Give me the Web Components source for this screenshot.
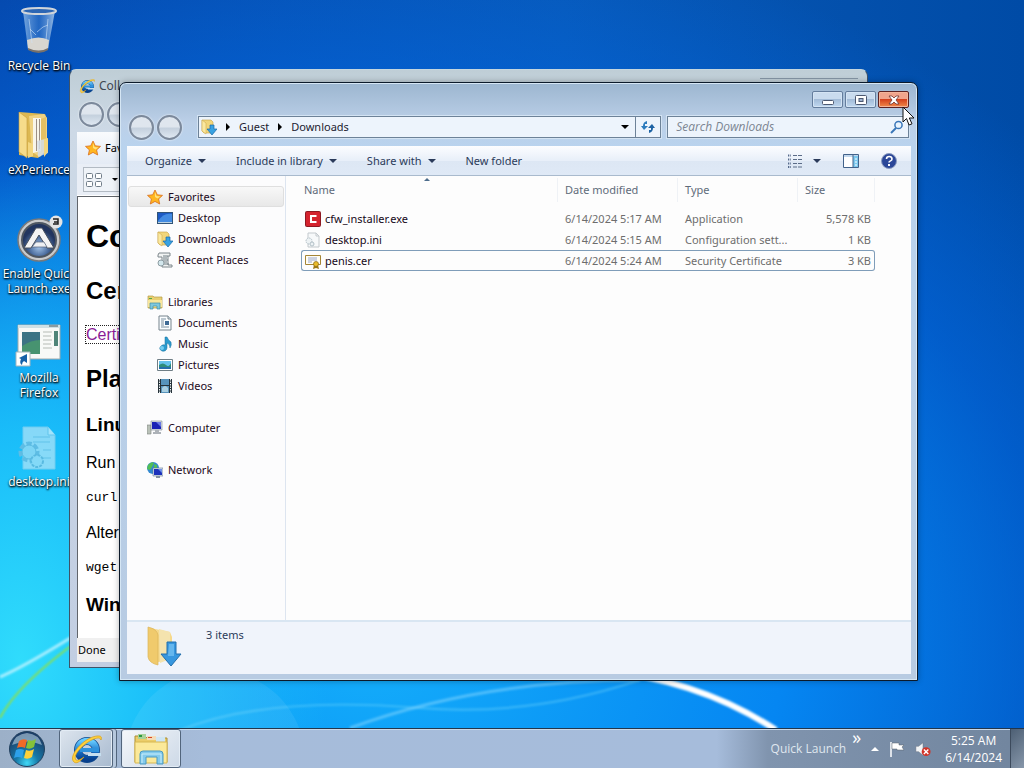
<!DOCTYPE html>
<html lang="en">
<head>
<meta charset="utf-8">
<title>Desktop</title>
<style>
html, body { margin: 0; height: 100%; overflow: hidden; }
body { font: 11px/16px "Noto Sans", "Open Sans", sans-serif; color: #000; }
</style>
</head>
<body>
<desk-top>
  <desktop-icon icon="bin" label="Recycle Bin"></desktop-icon>
  <desktop-icon icon="docs" label="eXPerience"></desktop-icon>
  <desktop-icon icon="autoit" label="Enable Quick Launch.exe"></desktop-icon>
  <desktop-icon icon="shot" label="Mozilla Firefox"></desktop-icon>
  <desktop-icon icon="inibig" label="desktop.ini"></desktop-icon>
  <browser-window slot="windows"></browser-window>
  <explorer-window slot="windows"></explorer-window>
  <task-bar slot="taskbar"></task-bar>
</desk-top>

<script>
const ICONS = {
bin: ['0 0 48 48', `<defs><linearGradient id="a"><stop stop-color="#9cc4ec" stop-opacity=".75"/><stop offset=".5" stop-color="#3f7fce" stop-opacity=".5"/><stop offset="1" stop-color="#bcd6f0" stop-opacity=".8"/></linearGradient></defs><path d="M8 4 13 42q11 6 20 0L40 4z" fill="url(#a)"/><path d="M12 33q12-5 22 0l-1 9q-9 6-20 0z" fill="#d8d6d0"/><path d="M13 41q11 5 20 0v2q-9 6-20 0z" fill="#77706a"/><ellipse cx="24" cy="4" rx="17" ry="3" fill="#2c66b4" stroke="#d0d5da" stroke-width="2"/><path d="m14 12 3 24M33 12l-2 21M22 25l6-5 5-2M15 22l6 6" stroke="#cfe3f7" fill="none" opacity=".6"/>`],
docs: ['0 0 48 48', `<path d="M4 1 30 3l2 5v31l-9 8L4 44z" fill="#dcb852"/><path d="M4 1 12 7v40l-8-6z" fill="#f6dc8b" stroke="#c79c3b" stroke-width=".6"/><path d="M14 5 29 3l3 4v30l-7 9-8-5z" fill="#efd283"/><path d="M18 7h8v33l-8 2z" fill="#f8f5ea"/><path d="M21 8h1v32h-1zM24 8h1v30h-1z" fill="#9c8f85"/><path d="M26 8l5-2v31l-5 5z" fill="#e5c063"/><path d="M22 30l8-2 3 2v12l-10 4z" fill="#d5dde6" opacity=".85"/><path d="M13 31l5 2v12l-5 2zM29 28l4-1v14l-4 5z" fill="#f3d67f"/>`],
autoit: ['0 0 48 48', `<defs><radialGradient id="a" cy=".7"><stop stop-color="#a4c5ea"/><stop offset=".6" stop-color="#47689a"/><stop offset="1" stop-color="#22355f"/></radialGradient></defs><circle cx="24" cy="25" r="21" fill="#c9cacb" stroke="#77797c" stroke-width="1.5"/><circle cx="24" cy="25" r="17" fill="url(#a)" stroke="#4e5661" stroke-width="2"/><path d="m21 13h6l12 20h-7L24 20l-8 13H9z" fill="#f4f4f4" stroke="#48505d"/><path d="m17 32 4-5h8l3 5z" fill="#eef0f3" stroke="#506078" stroke-width=".7"/><circle cx="41" cy="7" r="6.500" fill="#e4e5e6"/><path d="M38 4h5v5h-5m1-2h4" stroke="#222" stroke-width="1.5" fill="none"/>`],
shot: ['0 0 48 48', `<path d="M3 6h42v34H3z" fill="#f8f9f7" stroke="#9eaaac"/><path d="M3 6h42v3H3z" fill="#cfe0e5"/><path d="M34 7h9" stroke="#48565a"/><path d="M7 13h18v22H7z" fill="#479370"/><path d="M7 13h18v8q-9 0-18 6z" fill="#3c7384"/><path d="M28 13h9M28 17h8M28 21h9M28 25h8M28 29h9" stroke="#cbd0cb" stroke-width="1.5"/><path d="M39 12h4v15h-4z" fill="#4f8478"/><path d="M1 33h14v14H1z" fill="#fff" stroke="#a5b5bd"/><path d="M4 39 12 35v9l-3-2q-2 1-2 4-3-2-1-6z" fill="#1660a8"/>`],
inibig: ['0 0 48 48', `<g opacity=".6"><path d="M8 4h25l7 8v34H8z" fill="#cfecf8" stroke="#a5d6ec"/><path d="M33 4v8h7" fill="#fff" stroke="#8fcbe6"/><path d="M18 14h17M18 19h17M28 27h8M28 35h8" stroke="#8fc6df"/><circle cx="14" cy="29" r="8" fill="none" stroke="#8bbcd8" stroke-width="5" stroke-dasharray="5 2"/><circle cx="14" cy="29" r="7" fill="#bee4f3" stroke="#82b7d2"/><circle cx="22" cy="38" r="6" fill="#c8e9f6" stroke="#82b7d2" stroke-width="2" stroke-dasharray="3 1"/></g>`],
ie: ['0 0 32 32', `<defs><linearGradient id="a" x2="0" y2="1"><stop stop-color="#65caff"/><stop offset=".6" stop-color="#166ec4"/><stop offset="1" stop-color="#07408e"/></linearGradient></defs><circle cx="17" cy="17" r="9" fill="none" stroke="#124a8c" stroke-width="8"/><circle cx="17" cy="17" r="9" fill="none" stroke="url(#a)" stroke-width="6.5"/><path d="M18 20h13v3H18z" fill="#c6dff0"/><path d="M10 15h19v4H10z" fill="#2f92dc"/><path d="M4 29C-3 23 16 2 29 3c2 0 3 1 2 4-1-3-4-2-7-1C14 10 2 22 6 27c2 1 5-1 8-3-4 5-8 7-10 5" fill="#ffd13c" stroke="#d99e17" stroke-width=".7"/>`],
star: ['0 0 16 16', `<path d="m8 1 2.3 4.8 5.2.6-3.9 3.5 1.1 5.1L8 12.4 3.3 15l1.1-5.1L.5 6.4l5.2-.6z" fill="#ffb620" stroke="#d96d1c" stroke-width=".8"/><path d="m8 3 1.5 4 4 .4-3 2.2L8 8z" fill="#ffe27e"/>`],
desktop: ['0 0 16 16', `<path d="M0 2h16v12H0z" fill="#315478"/><path d="M1 3h14v9H1z" fill="#1d5ac4"/><path d="M1 11Q7 2 15 4v8H1z" fill="#438be2"/><path d="M1 12h14v1H1z" fill="#bcd2e2"/>`],
down: ['0 0 16 16', `<path d="M1 1h9l2 2v11H3L1 12z" fill="#f1d67b" stroke="#c8a345" stroke-width=".6"/><path d="M1 1 5 4v11l-4-3z" fill="#fae89f" stroke="#c8a345" stroke-width=".5"/><path d="M9 6h4v4h3l-5 6-5-6h3z" fill="#38a2e2" stroke="#1969a8" stroke-width=".7"/>`],
recent: ['0 0 16 16', `<path d="M2 1h11v3h-2v9h4v2H5V5H1V3z" fill="#f1f3f3" stroke="#7d868b"/><path d="M6 4h5M6 6h4M6 8h5M6 10h4M6 12h6" stroke="#6f7c83"/><circle cx="4" cy="11" r="3" fill="#d3e7ed" stroke="#8d9ca2"/>`],
lib: ['0 0 16 16', `<path d="M1 2h5l1 1h8v11H1z" fill="#e9cf72" stroke="#b69b45" stroke-width=".7"/><path d="M2 4h3v1H2z" fill="#4eaa45"/><path d="M1 6h14v7H1z" fill="#f8e69b"/><path d="M3 9h10v6h-3v-3H6v3H3z" fill="#7fc8dd" stroke="#408da8" stroke-width=".7"/>`],
doc: ['0 0 16 16', `<path d="M2 1h9l3 3v11H2z" fill="#fafdff" stroke="#76848d"/><path d="M11 1v3h3" fill="#d6e4eb" stroke="#76848d"/><path d="M4 4h5M4 6h3M4 8h3M4 10h3M4 12h8" stroke="#7a8f9f"/><path d="M8 6h4v4H8z" fill="#3e6a95"/>`],
music: ['0 0 16 16', `<path d="M8 1h2q1 3 4 5 1 3-1 6 0-4-3-5v5q-1 4-5 3-4-2-1-5 2-2 4-1z" fill="#2c9bce" stroke="#19719c" stroke-width=".5"/><circle cx="5" cy="12" r="2" fill="#76cdf0"/>`],
pic: ['0 0 16 16', `<path d="M.5 2.5h15v11H.5z" fill="#fff" stroke="#6f7e86"/><path d="M2 4h12v8H2z" fill="#65c2ec"/><path d="M2 8q4-3 7 0t5-2v6H2z" fill="#2f8d7a"/><path d="M2 10h12v2H2z" fill="#256eac"/>`],
video: ['0 0 16 16', `<path d="M1 1h14v14H1z" fill="#263239"/><path d="M4 1h8v6H4zM4 8h8v7H4z" fill="#5793bb"/><path d="M5 10q3-4 6 0v4H5z" fill="#a9cfe1"/><path d="M2.500 1v14M13.500 1v14" stroke="#e8eff3" stroke-dasharray="1.500 1"/>`],
comp: ['0 0 16 16', `<path d="M0 5h4v9H0z" fill="#b9c1b8" stroke="#7c857f" stroke-width=".6"/><path d="M4 1h11v9H4z" fill="#dbe1e7" stroke="#7e8790" stroke-width=".6"/><path d="M5 2h9v7H5z" fill="#1922b5"/><path d="m9 2 5 0v5z" fill="#6a78e4"/><path d="M8 10h4v2h2v2H6v-2h2z" fill="#adb2b8"/>`],
net: ['0 0 16 16', `<circle cx="6" cy="6" r="6" fill="#3289d0"/><path d="M1 3q4-4 6-2l-2 4-2 3-3-1zM7 2l3 1v3H7z" fill="#52bf56"/><path d="M6 6h10v8H6z" fill="#dfe7ef" stroke="#60748e" stroke-width=".6"/><path d="M7 7h8v6H7z" fill="#1c31bb"/><path d="m11 7 4 0v4z" fill="#6d8fe8"/><path d="M9 14h4v2H9z" fill="#8392a2"/>`],
exe: ['0 0 16 16', `<rect width="16" height="16" rx="2" fill="#8d1822"/><rect x="1" y="1" width="14" height="14" rx="1" fill="#d5232e"/><path d="M11.500 5H6v6h5.500" fill="none" stroke="#fff" stroke-width="2"/>`],
ini: ['0 0 16 16', `<path d="M3 1h8l3 3v11H3z" fill="#f7f9fa" stroke="#c3c9cd"/><path d="M11 1v3h3" fill="none" stroke="#c3c9cd"/><circle cx="4" cy="9" r="3" fill="#edf2f4" stroke="#b2bfc6" stroke-dasharray="1.500 .8"/><circle cx="7" cy="12" r="2" fill="#edf2f4" stroke="#b2bfc6"/>`],
cert: ['0 0 16 16', `<path d="M.5 2.500h15v9H.5z" fill="#fffdf4" stroke="#a58535"/><path d="M3 5h9M3 7h9M3 9h4" stroke="#9aa7cb"/><path d="m9 12-1 4 3-1 3 1-1-4z" fill="#9c7816"/><circle cx="11" cy="11" r="2.500" fill="#ebbd2b" stroke="#8a6613" stroke-width=".7"/>`],
folderdown: ['0 0 40 44', `<path d="M3 4 23 8l2 5v22L7 39z" fill="#f6d98b"/><path d="M12 5l11 3v27l-10 4z" fill="#f4e3ae"/><path d="M1 3q9 2 10 8v30q-9-2-10-8z" fill="#f0ca6c" stroke="#dbb55a" stroke-width=".7"/><path d="M20 18h9v12h5L24 42 14 30h6z" fill="#3797df" stroke="#236fac"/><path d="M22 20h5v12h-6z" fill="#65b7ee"/>`],
explorer: ['0 0 34 32', `<path d="M1 3h10l2 2h20v24H1z" fill="#ebcd69" stroke="#aa8e36"/><path d="M4 1h8v5H4z" fill="#a9d29b"/><path d="M5 2h3v2H5z" fill="#2c9840"/><path d="M13 3h9v4h-9z" fill="#f4dcb8"/><path d="M14 4h4v1h-4z" fill="#d74727"/><path d="M22 4h9v5h-9z" fill="#cfe6f3"/><path d="M1 9h32v21H1z" fill="#fbe999" stroke="#d6b753"/><path d="M6 31V21q0-3 3-3h17q3 0 3 3v10h-6v-7H12v7z" fill="#83caec" stroke="#4a99c1"/><path d="M8 30v-9h19v9" fill="none" stroke="#c9eefb"/>`],
orb: ['0 0 36 36', `<defs><radialGradient id="a" cy=".9" r=".8"><stop stop-color="#40d8f6"/><stop offset=".4" stop-color="#1779a8"/><stop offset="1" stop-color="#1b3e68"/></radialGradient></defs><circle cx="18" cy="18" r="17.500" fill="url(#a)" stroke="#22405e"/><path d="M3 14Q6 3 18 2q12 1 15 12-15-7-30 0" fill="#b9d2e2" opacity=".6"/><path d="M10 10q4-3 8-1l-2 8q-4-2-8 0z" fill="#f06a27"/><path d="M19 9q4 2 8-1l-2 8q-4 3-8 1z" fill="#85c239"/><path d="M7 19q4-2 8 0l-2 8q-4-2-8 0z" fill="#2da1ea"/><path d="M17 19q4 2 8-1l-2 8q-4 3-8 1z" fill="#ffd13a"/>`],
refresh: ['0 0 16 14', `<path d="M7 1v3H5v2h3L4 10 1 6h2Q3 2 7 1z" fill="#2c7bbd"/><path d="M9 13v-3h2V8H8l4-4 3 4h-2q0 4-4 5z" fill="#1d63a4"/>`],
glass: ['0 0 14 14', `<circle cx="8.500" cy="5" r="3.600" fill="#eaf4fd" stroke="#3a76b8" stroke-width="1.500"/><path d="m6 8-5 5" stroke="#3a76b8" stroke-width="2"/>`],
listview: ['0 0 16 14', `<path d="M1 1.500h3M1 5.500h3M1 9.500h3M1 13h3" stroke="#55698a" stroke-width="2" stroke-dasharray="1 .7"/><path d="M6 1.500h4M11 1.500h4M6 5.500h4M11 5.500h4M6 9.500h4M11 9.500h4M6 13h4M11 13h4" stroke="#5b6c88"/>`],
pane: ['0 0 16 14', `<path d="M.5.5h15v13H.5z" fill="#fff" stroke="#42628a"/><path d="M1 1h14v2H1z" fill="#c2d7ec"/><path d="M10 2h5v11h-5z" fill="#7cc8ee"/><path d="M10 1v12" stroke="#42628a"/><path d="M12 5h2M12 8h2M12 11h2" stroke="#fff"/>`],
help: ['0 0 16 16', `<circle cx="8" cy="8" r="7.500" fill="#2b4798" stroke="#8c9cc0"/><path d="M5.500 6q0-2.500 2.700-2.500T11 6q0 1.200-1.500 1.900T8 9.600" stroke="#fff" stroke-width="1.600" fill="none"/><path d="M7 11h2v2H7z" fill="#fff"/>`],
grid: ['0 0 16 14', `<g fill="#fff" stroke="#707d89"><rect x=".5" y=".5" width="6" height="5" rx="1"/><rect x="9.500" y=".5" width="6" height="5" rx="1"/><rect x=".5" y="8.500" width="6" height="5" rx="1"/><rect x="9.500" y="8.500" width="6" height="5" rx="1"/></g>`],
tri: ['0 0 8 4', `<path d="M0 0h8L4 4z" fill="currentColor"/>`],
triright: ['0 0 4 8', `<path d="M0 0l4 4-4 4z" fill="currentColor"/>`],
triup: ['0 0 8 4', `<path d="M0 4h8L4 0z" fill="currentColor"/>`],
min: ['0 0 12 10', `<rect x=".5" y="5.500" width="11" height="4" rx="1" fill="#fff" stroke="#4c5870"/>`],
max: ['0 0 12 10', `<rect x=".5" y=".5" width="11" height="9" rx="1" fill="#fff" stroke="#4c5870"/><rect x="4" y="3.500" width="4" height="3" fill="#9fb4d2" stroke="#4c5870"/>`],
close: ['0 0 12 10', `<path d="M1 1h3l2 2 2-2h3L8 5l3 4H8L6 7 4 9H1l3-4z" fill="#fff" stroke="#6c3430" stroke-width=".8"/>`],
flag: ['0 0 16 16', `<path d="M2 1v15" stroke="#fff" stroke-width="1.500"/><path d="M3 2h7v2h5l-2 2 2 3H8V8H3z" fill="#fff" stroke="#58616b" stroke-width=".5"/>`],
mute: ['0 0 18 16', `<path d="M1 5h3l5-4v14l-5-4H1z" fill="#f2f4f6" stroke="#626c78" stroke-width=".5"/><circle cx="12.500" cy="11" r="5" fill="#d23428"/><path d="m10 8.500 5 5m0-5-5 5" stroke="#fff" stroke-width="1.600"/>`],
cursor: ['0 0 13 20', `<path d="M1 1v15l3.500-3.500L7 19l3-1.200L7.300 12H12z" fill="#fff" stroke="#111"/>`]
};

const define = (name, html, setup) => {
  const tpl = document.createElement('template');
  tpl.innerHTML = html;
  customElements.define(name, class extends HTMLElement {
    constructor() {
      super();
      this.attachShadow({ mode: 'open' }).append(tpl.content.cloneNode(true));
    }
    connectedCallback() { if (setup) setup(this, this.shadowRoot); }
  });
};

define('ui-icon', `<style>:host{display:block;flex:none;width:16px;height:16px}div,svg{display:block;width:100%;height:100%}</style><div></div>`, (el, root) => {
  const [box, body] = ICONS[el.getAttribute('name')];
  root.querySelector('div').innerHTML = `<svg viewBox="${box}" aria-hidden="true">${body}</svg>`;
});

define('desktop-icon', `
<style>
:host{display:block;width:100%}
a{display:flex;flex-direction:column;align-items:center;gap:3px;color:#fff;text-decoration:none;text-align:center;font:12px/15px "Open Sans","Noto Sans",sans-serif;text-shadow:1px 1px 2px #000,0 1px 2px #000}
ui-icon{width:48px;height:48px}
</style>
<a href="#"><span></span></a>`, (el, root) => {
  const icon = document.createElement('ui-icon');
  icon.setAttribute('name', el.getAttribute('icon'));
  root.querySelector('a').prepend(icon);
  root.querySelector('span').textContent = el.getAttribute('label');
});

define('desk-top', `
<style>
:host{position:relative;display:flex;flex-direction:column;height:100vh;overflow:hidden;
background:radial-gradient(ellipse 30% 66% at 2% 86%,#30dcfc,rgba(28,195,250,.9) 45%,transparent),radial-gradient(ellipse 90% 95% at 36% 84%,#14aefb 0,#0586f2 45%,rgba(2,104,226,.6) 75%,transparent),linear-gradient(90deg,#0548ac,#0858b6 55%,#004ba6)}
.wall{position:absolute;inset:0;width:100%;height:100%}
.icons{position:relative;flex:1;display:grid;grid-auto-rows:104px;grid-template-columns:74px;align-content:start;padding:7px 2px;min-height:0}
::slotted([slot=taskbar]){position:relative}
</style>
<svg class="wall" viewBox="0 0 1024 768" preserveAspectRatio="none" aria-hidden="true">
<defs><filter id="soft"><feGaussianBlur stdDeviation="1"/></filter></defs>
<g fill="none" filter="url(#soft)">
<path d="M0 677Q35 662 130 600" stroke="#c4f4ff" stroke-width="3" opacity=".8"/>
<path d="M0 718Q25 670 140 600" stroke="#8be04f" stroke-width="2"/>
<path d="M120 768Q200 690 420 708T860 560" stroke="#73d8fa" stroke-width="2" opacity=".45"/>
<path d="M350 728Q480 680 640 680" stroke="#92dcff" stroke-width="3" opacity=".5"/>
<path d="M600 670Q700 680 776 730" stroke="#fff" stroke-width="6"/>
</g>
<circle cx="215" cy="760" r="90" fill="#fff" opacity=".07"/>
</svg>
<div class="icons"><slot></slot></div>
<slot name="windows"></slot>
<slot name="taskbar"></slot>`);

define('nav-buttons', `
<style>
:host{display:flex;gap:3px;flex:none}
button{width:25px;height:25px;padding:0;border:2px solid #7c899b;border-radius:50%;background:linear-gradient(#dfe6ee 45%,#c5d1de 55%,#dfe8f2);box-shadow:0 0 2px #fff}
</style>
<button aria-label="Back"></button><button aria-label="Forward"></button>`);

define('browser-window', `
<style>
:host{position:absolute;left:69px;right:156px;top:69px;bottom:100px;box-sizing:border-box;display:flex;flex-direction:column;padding:0 7px 5px;border:1px solid #3f5368;border-top-color:#c5d6de;border-radius:7px 7px 0 0;background:linear-gradient(#bfced6,#cdd9e6 60px,#c2cee2);overflow:hidden}
header{display:flex;align-items:center;gap:4px;padding:8px 2px 0;height:16px;color:#3f4750;font-size:12px}
header .caps{margin-left:auto;align-self:flex-start;width:98px;border-top:1px solid #8595a5}
nav-buttons{padding:8px 2px 5px}
.fav{display:flex;align-items:center;gap:4px;height:32px;padding-left:8px;background:linear-gradient(#f9fbfd,#e4ebf5)}
.tools{display:flex;align-items:center;height:31px;background:#e9eef6;border-bottom:1px solid #fff}
.tools button{display:flex;align-items:center;gap:10px;height:25px;margin-left:6px;padding:0 2px;border:1px solid #b2bac3;background:#eff3f8}
.tools ui-icon[name=grid]{height:14px}
.tools ui-icon[name=tri]{width:6px;height:3px}
article{flex:1;display:flex;flex-direction:column;align-items:flex-start;gap:20px;min-height:0;overflow:hidden;background:#fff;border:solid #61656b;border-width:1px 0 0 1px;padding:20px 8px 0;font:16px/16px "Liberation Sans",Arial,sans-serif}
h1,h2,h3,p,pre{margin:0}
h1{font-size:32px;line-height:38px}h2{font-size:24px;line-height:32px}h3{font-size:19px;line-height:20px}
pre{font:13px/14px "Liberation Mono","Courier New",monospace}
a{color:#8a1a96;text-decoration:none;outline:1px dotted #222}
footer{height:24px;line-height:24px;padding-left:1px;background:#f0f0f0}
</style>
<header><ui-icon name="ie"></ui-icon><span>Coll</span><span class="caps"></span></header>
<nav-buttons></nav-buttons>
<div class="fav"><ui-icon name="star"></ui-icon><span>Fav</span></div>
<div class="tools"><button aria-label="Tabs"><ui-icon name="grid"></ui-icon><ui-icon name="tri"></ui-icon></button></div>
<article><h1>Co</h1><h2>Cer</h2><p><a href="#">Certi</a></p><h2>Pla</h2><h3>Linu</h3><p>Run t</p><pre>curl</pre><p>Alter</p><pre>wget</pre><h3>Win</h3></article>
<footer>Done</footer>`);

define('caption-buttons', `
<style>
:host{display:flex;gap:2px}
button{display:grid;place-items:center;width:31px;height:17px;padding:0;border:1px solid #647d9d;border-radius:2px;background:linear-gradient(#c9dbee 45%,#a3bcd8 50%,#c0d8f0);box-shadow:inset 0 0 0 1px #d4e4f4}
.close{background:linear-gradient(#f0a48c 45%,#d4411d 50%,#f08a4b);border-color:#5d2222;box-shadow:inset 0 0 0 1px #f3b49a}
ui-icon{width:12px;height:10px}
</style>
<button aria-label="Minimize"><ui-icon name="min"></ui-icon></button><button aria-label="Maximize"><ui-icon name="max"></ui-icon></button><button class="close" aria-label="Close"><ui-icon name="close"></ui-icon></button>`);

define('address-bar', `
<style>
:host{display:flex;flex:1;box-sizing:border-box;height:22px;border:1px solid #6d8298;background:#edf4fc;box-shadow:0 0 0 1px #d3e3f3}
nav{display:flex;align-items:center;flex:1;gap:9px;padding-left:2px}
a{color:#1c1c30;text-decoration:none}
ui-icon[name=triright]{width:4px;height:8px}
button{display:grid;place-items:center;padding:0;border:0;background:none;width:20px}
.re{width:25px;border-left:1px solid #6d8298}
ui-icon[name=tri]{width:8px;height:4px}
.re ui-icon{height:14px}
</style>
<nav aria-label="Location"><ui-icon name="down"></ui-icon><ui-icon name="triright"></ui-icon><a href="#">Guest</a><ui-icon name="triright"></ui-icon><a href="#">Downloads</a></nav>
<button aria-label="Previous locations"><ui-icon name="tri"></ui-icon></button><button class="re" aria-label="Refresh"><ui-icon name="refresh"></ui-icon></button>`);

define('search-box', `
<style>
:host{display:flex;align-items:center;box-sizing:border-box;width:31%;height:22px;padding:0 4px 0 8px;border:1px solid #6d8298;background:#edf4fc;box-shadow:0 0 0 1px #d3e3f3}
input{flex:1;min-width:0;padding:0;border:0;outline:0;background:none;font:italic 12px/16px "Open Sans","Noto Sans",sans-serif}
input::placeholder{color:#7c8592;opacity:1}
ui-icon{width:14px;height:14px}
</style>
<input type="text" placeholder="Search Downloads" aria-label="Search Downloads"><ui-icon name="glass"></ui-icon>`);

define('command-bar', `
<style>
:host{display:flex;align-items:center;height:30px;flex:none;padding:0 14px 0 18px;background:linear-gradient(#fcfdff,#e8eff9 50%,#dde7f4 51%,#dfe9f6);border-bottom:1px solid #a9bacd;box-sizing:border-box}
button{display:flex;align-items:center;gap:6px;padding:0;margin-right:30px;border:0;background:none;font:inherit;color:#2b3b5a;white-space:nowrap}
.right{display:flex;gap:22px;margin-left:auto}
.right button{margin:0;gap:10px}
ui-icon[name=tri]{width:8px;height:4px}
ui-icon[name=listview],ui-icon[name=pane]{height:14px}
</style>
<button>Organize<ui-icon name="tri"></ui-icon></button><button>Include in library<ui-icon name="tri"></ui-icon></button><button>Share with<ui-icon name="tri"></ui-icon></button><button>New folder</button>
<div class="right"><button aria-label="Views"><ui-icon name="listview"></ui-icon><ui-icon name="tri"></ui-icon></button><button aria-label="Preview pane"><ui-icon name="pane"></ui-icon></button><button aria-label="Help"><ui-icon name="help"></ui-icon></button></div>`);

define('nav-tree', `
<style>
:host{display:block;width:159px;flex:none;box-sizing:border-box;padding:10px 1px 0;border-right:1px solid #dde5f0;background:#fcfcfd}
ul{list-style:none;margin:0 0 21px;padding:0}
a{display:flex;align-items:center;gap:5px;height:21px;padding-left:19px;box-sizing:border-box;color:#1c0a22;text-decoration:none}
ul ul{margin:0}
ul ul a{padding-left:29px}
.on{border:1px solid #dfdfdf;border-radius:3px;padding-left:18px;background:linear-gradient(#f8f8f8,#e8e8e8)}
</style>
<nav aria-label="Folders">
<ul><li><a class="on" href="#"><ui-icon name="star"></ui-icon>Favorites</a><ul>
<li><a href="#"><ui-icon name="desktop"></ui-icon>Desktop</a></li><li><a href="#"><ui-icon name="down"></ui-icon>Downloads</a></li><li><a href="#"><ui-icon name="recent"></ui-icon>Recent Places</a></li></ul></li></ul>
<ul><li><a href="#"><ui-icon name="lib"></ui-icon>Libraries</a><ul>
<li><a href="#"><ui-icon name="doc"></ui-icon>Documents</a></li><li><a href="#"><ui-icon name="music"></ui-icon>Music</a></li><li><a href="#"><ui-icon name="pic"></ui-icon>Pictures</a></li><li><a href="#"><ui-icon name="video"></ui-icon>Videos</a></li></ul></li></ul>
<ul><li><a href="#"><ui-icon name="comp"></ui-icon>Computer</a></li></ul>
<ul><li><a href="#"><ui-icon name="net"></ui-icon>Network</a></li></ul>
</nav>`);

define('file-list', `
<style>
:host{display:block;position:relative;flex:1;min-width:0;padding:2px 36px 0 15px;background:#fdfdfd}
table{width:100%;table-layout:fixed;border-collapse:separate;border-spacing:0;color:#6d6d6d}
th{position:relative;box-sizing:border-box;height:24px;padding:0 0 0 7px;text-align:left;font-weight:400;color:#5f6b7a;border-right:1px solid #eff2f6}
th:first-child{padding-left:3px}
thead::after{content:"";display:block;height:6px}
td{height:19px;padding:0 0 0 7px;border:1px solid transparent;border-width:1px 0;white-space:nowrap;overflow:hidden;text-overflow:ellipsis}
td:first-child{padding-left:3px;border-left-width:1px;color:#160818}
td:last-child{padding:0 3px 0 0;text-align:right;border-right-width:1px}
.sel td{border-color:#7f9db9}
.sel td:first-child{border-radius:3px 0 0 3px}
.sel td:last-child{border-radius:0 3px 3px 0}
.f{display:flex;align-items:center;gap:4px}
.d{width:120px}.s{width:77px}
.sort{position:absolute;left:48%;top:0;width:6px;height:3px;color:#4d6d8c}
</style>
<table><thead><tr><th>Name<ui-icon class="sort" name="triup"></ui-icon></th><th class="d">Date modified</th><th class="d">Type</th><th class="s">Size</th></tr></thead>
<tbody>
<tr><td><div class="f"><ui-icon name="exe"></ui-icon>cfw_installer.exe</div></td><td>6/14/2024 5:17 AM</td><td>Application</td><td>5,578 KB</td></tr>
<tr><td><div class="f"><ui-icon name="ini"></ui-icon>desktop.ini</div></td><td>6/14/2024 5:15 AM</td><td>Configuration sett...</td><td>1 KB</td></tr>
<tr class="sel"><td><div class="f"><ui-icon name="cert"></ui-icon>penis.cer</div></td><td>6/14/2024 5:24 AM</td><td>Security Certificate</td><td>3 KB</td></tr>
</tbody></table>`);

define('explorer-window', `
<style>
:host{position:absolute;left:119px;right:106px;top:82px;bottom:87px;box-sizing:border-box;display:flex;flex-direction:column;padding:0 6px 6px 7px;border:1px solid #0c1a2a;border-radius:7px 7px 0 0;background:linear-gradient(#9cb6d0,#bcd0e8 40px,#b9d3ee 64px,#b8cbe2);box-shadow:inset 0 0 0 1px #d5e6f4,0 0 6px rgba(0,0,0,.3)}
caption-buttons{align-self:flex-end;padding:8px 2px 8px 0}
.bar{display:flex;align-items:center;gap:6px;height:22px;padding:0 2px 8px}
nav-buttons{margin-right:10px}
.main{flex:1;display:flex;min-height:0}
footer{display:flex;gap:19px;height:54px;flex:none;box-sizing:border-box;padding:2px 20px;border-top:2px solid #d9e6f2;background:#f0f4fb;color:#2b3b5a}
footer ui-icon{width:40px;height:44px}
footer span{padding-top:3px}
.cursor{position:absolute;right:2px;top:23px;width:13px;height:20px}
</style>
<caption-buttons></caption-buttons>
<div class="bar"><nav-buttons></nav-buttons><address-bar></address-bar><search-box></search-box></div>
<command-bar></command-bar>
<div class="main"><nav-tree></nav-tree><file-list></file-list></div>
<footer><ui-icon name="folderdown"></ui-icon><span>3 items</span></footer>
<ui-icon class="cursor" name="cursor"></ui-icon>`);

define('task-bar', `
<style>
:host{display:flex;flex:none;align-items:stretch;height:40px;box-sizing:border-box;border-top:1px solid #22364c;background:linear-gradient(90deg,#9cb0c8 0,#a6bcda 20%,#a6bcdb 70%,#8094ae 75%,#71859e);box-shadow:inset 0 1px #c9d9ea;color:#fff;font:12px/16px "Open Sans","Noto Sans",sans-serif}
button{display:grid;place-items:center;padding:0;border:0;background:none}
.start{width:54px}.start ui-icon{width:36px;height:36px}
.task{width:57px;margin-left:5px;border:1px solid #52657c;border-radius:3px;background:linear-gradient(135deg,#dde5ee,#a8bacf);box-shadow:inset 0 0 0 1px #e3ecf5}
.stack{width:54px;box-shadow:inset 0 0 0 1px #e3ecf5,3px 0 #b6c8dd,4px 0 #52657c}
.stack+.task{margin-left:8px;width:60px;background:linear-gradient(135deg,#f4f7fa,#cdd9e7)}
.task ui-icon{width:34px;height:32px}
.tray{display:flex;align-items:center;margin-left:auto;gap:10px}
.ql{color:#dfe6ee}
.tray .more{align-self:flex-start;margin-left:-4px;font:18px/16px "Open Sans",sans-serif;color:#fff}
.tray ui-icon[name=triup]{width:8px;height:4px}
time{text-align:center;line-height:17px;padding:0 8px 0 4px}
.peek{width:14px;margin-left:-10px;align-self:stretch;border-left:1px solid #3c4a5c;background:linear-gradient(135deg,#4d5f74,#8797aa)}
</style>
<button class="start" aria-label="Start"><ui-icon name="orb"></ui-icon></button>
<button class="task stack" aria-label="Internet Explorer"><ui-icon name="ie"></ui-icon></button>
<button class="task" aria-label="Downloads"><ui-icon name="explorer"></ui-icon></button>
<div class="tray"><span class="ql">Quick Launch</span><button class="more" aria-label="More">»</button><ui-icon name="triup"></ui-icon><ui-icon name="flag"></ui-icon><ui-icon name="mute"></ui-icon><time>5:25 AM<br>6/14/2024</time><button class="peek" aria-label="Show desktop"></button></div>`);
</script>
</body>
</html>
